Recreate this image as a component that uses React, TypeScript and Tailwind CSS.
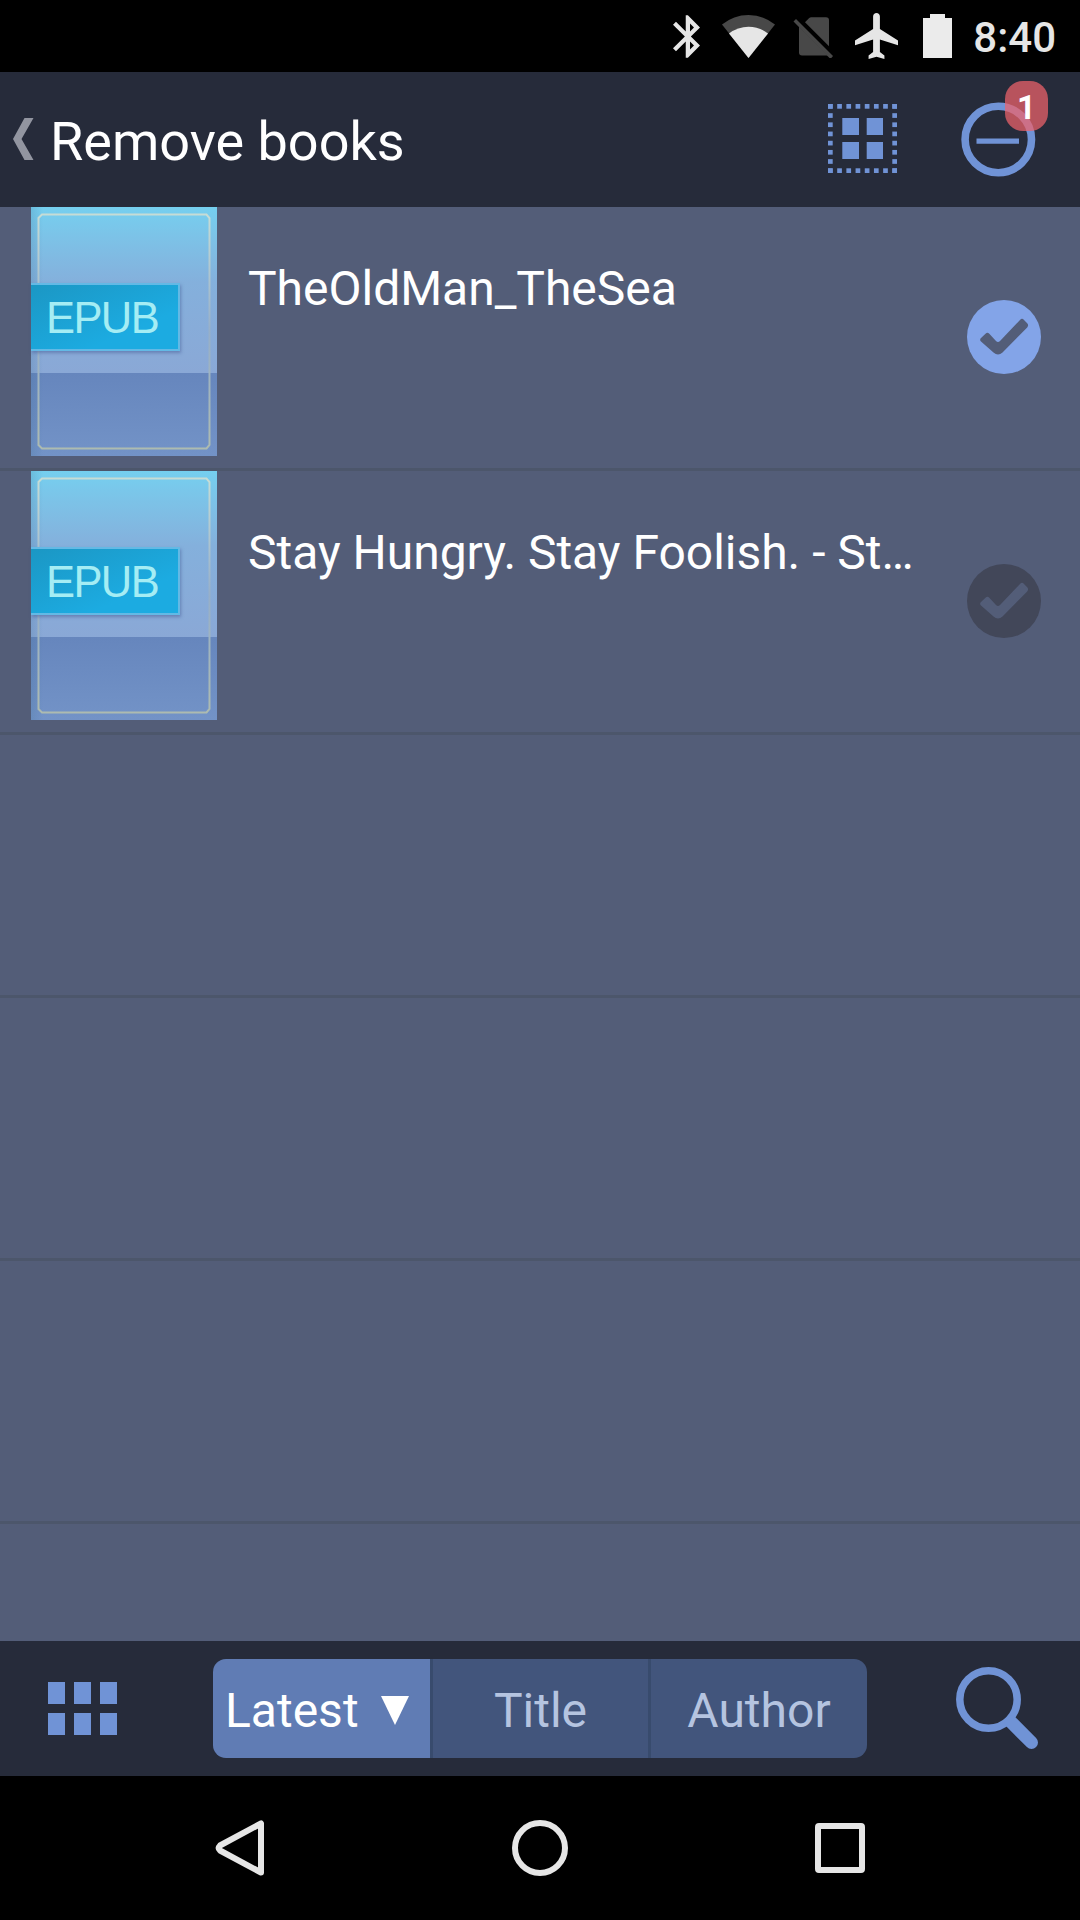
import React, { useState } from 'react';

interface Book {
  id: string;
  title: string;
}

const books: Book[] = [
  { id: 'old-man', title: 'TheOldMan_TheSea' },
  { id: 'stay-hungry', title: 'Stay Hungry. Stay Foolish. - St…' },
];

const sortOptions = ['Latest', 'Title', 'Author'];

const dots = Array.from({ length: 8 }, (_, i) => i * 9.19);

const StatusBar: React.FC = () => (
  <div className="h-[72px] shrink-0 bg-black flex items-center justify-end pr-6 text-[#e6e6e6]">
    <svg className="w-[27px] h-[43px]" viewBox="5 2 12.71 20" fill="currentColor">
      <path d="M17.71 7.71L12 2h-1v7.59L6.41 5 5 6.41 10.59 12 5 17.59 6.41 19 11 14.41V22h1l5.71-5.71-4.3-4.29 4.3-4.29zM13 5.83l1.88 1.88L13 9.59V5.83zm1.88 10.46L13 18.17v-3.76l1.88 1.88z" />
    </svg>
    <svg className="w-[53px] h-[43px] ml-[22px]" viewBox="0 0 53 43">
      <path d="M26.5 43 0 9.6Q11.5 0 26.5 0T53 9.6z" fill="#484848" />
      <path d="M26.5 43 7 18.4Q16 11.7 26.5 11.7T46 18.4z" fill="currentColor" />
    </svg>
    <svg className="w-10 h-[43px] ml-[18px]" viewBox="0 0 40 43" fill="#484848">
      <path d="M12 7.2 16.2 3q.8-.8 2-.8H33q3 0 3 3v26z" />
      <path d="M6 11.5 35 40.5H9q-3 0-3-3z" />
      <path d="M3 4 40 41l-2.5 3L.5 6.5z" />
    </svg>
    <svg className="w-[43px] h-[46px] ml-[22px]" viewBox="2 2 19 20" preserveAspectRatio="none" fill="currentColor">
      <path d="M21 16v-2l-8-5V3.5c0-.83-.67-1.5-1.5-1.5S10 2.67 10 3.5V9l-8 5v2l8-2.5V19l-2 1.5V22l3.5-1 3.5 1v-1.5L13 19v-5.5l8 2.5z" />
    </svg>
    <svg className="w-[29px] h-11 ml-[25px]" viewBox="0 0 29 44" fill="#ebebeb">
      <path d="M0 4h7V0h15v4h7v40H0z" />
    </svg>
    <span className="ml-[21px] mt-[3px] text-[42px] leading-[50px] font-medium">8:40</span>
  </div>
);

const Header: React.FC<{ count: number }> = ({ count }) => (
  <header className="h-[135px] shrink-0 bg-[#262b3a] flex items-center pl-[13px] pr-11 text-[#7093d6]">
    <svg className="w-[21px] h-[42px] mb-0.5" viewBox="0 0 21 42">
      <path d="M11.5 0h9L8.5 21l12 21h-9L0 21z" fill="#9295a0" />
    </svg>
    <h1 className="ml-4 mt-[5px] text-[54px] leading-none text-white">Remove books</h1>
    <button className="ml-auto mb-0.5">
      <svg className="w-[69px] h-[69px]" viewBox="0 0 69 69" fill="currentColor">
        {dots.map((p) => (
          <React.Fragment key={p}>
            <rect x={p} y="0" width="4.7" height="4.7" />
            <rect x={p} y="64.3" width="4.7" height="4.7" />
            <rect x="0" y={p} width="4.7" height="4.7" />
            <rect x="64.3" y={p} width="4.7" height="4.7" />
          </React.Fragment>
        ))}
        <path d="M14.3 14H31v17H14.3zM38.7 14H55v17H38.7zM14.3 38H31v17H14.3zM38.7 38H55v17H38.7z" />
      </svg>
    </button>
    <button className="relative ml-16">
      <svg className="w-[75px] h-[75px]" viewBox="0 0 75 75" fill="none" stroke="currentColor">
        <circle cx="37.3" cy="37.5" r="33.2" strokeWidth="7.6" />
        <path d="M15.5 39.2H58" strokeWidth="5.2" />
      </svg>
      <span className="absolute left-11 -top-[21px] w-[43px] h-[50px] rounded-[18px] bg-[#ee636b]/73 text-white text-[33px] leading-[53px] font-bold text-center">
        {count}
      </span>
    </button>
  </header>
);

const BookCover: React.FC = () => (
  <div className="relative w-[186px] h-[249px] shrink-0 flex flex-col">
    <div className="h-[166px] bg-linear-to-b from-[#75cfef] via-[#84b0dc] via-45% to-[#8aa8d6]" />
    <div className="grow bg-linear-to-b from-[#6686bd] to-[#7393c7]" />
    <div className="absolute inset-y-0 left-0 w-3 bg-linear-to-r from-[#3c6f94]/20 to-transparent" />
    <svg className="absolute inset-0 w-full h-full" viewBox="0 0 186 249" fill="none">
      <defs>
        <linearGradient id="frame" x1="0" y1="0" x2="0" y2="1">
          <stop offset="0" stopColor="#c6dcd5" />
          <stop offset=".5" stopColor="#96afc9" />
          <stop offset="1" stopColor="#adbbb0" />
        </linearGradient>
      </defs>
      <path d="M11 7.5H175.5L178.5 11V238L175.5 241.5H11L7.5 238V11z" stroke="url(#frame)" strokeWidth="2" />
    </svg>
    <div className="absolute left-0 top-[76px] w-[149px] h-[68px] border-2 border-l-0 border-[#63b9e5] bg-linear-to-br from-[#1b97c4] to-[#1cabe1] to-70% shadow-[1px_2px_3px_rgba(70,90,150,0.5)] pl-[15px] font-['Liberation_Sans',sans-serif] text-[43.5px] leading-[67px] tracking-[-1.6px] text-[#a5edf4]">
      EPUB
    </div>
  </div>
);

const BookRow: React.FC<{ book: Book; selected: boolean; onToggle: () => void }> = ({ book, selected, onToggle }) => (
  <div className="h-[264px] shrink-0 border-b-[3px] border-[#4c566b] flex pl-[31px] pr-[39px]">
    <BookCover />
    <p className="ml-[31px] mt-[53px] w-[670px] text-[48px] leading-[58px] tracking-[-0.02px] text-white truncate">{book.title}</p>
    <button onClick={onToggle} className="ml-auto mb-0.5 self-center">
      <svg className="w-[74px] h-[74px]" viewBox="0 0 74 74">
        <circle cx="37" cy="37" r="37" fill={selected ? '#83a4e8' : '#424759'} />
        <path
          d="M14 38 18.5 33.7Q20.4 32 22.3 33.7L29 41Q31 43 33 41L53 20Q55 17.5 57 20L60.2 23.2Q62 25.3 60.2 27.5L35.5 52.5Q31 56.5 26.5 52.5L14 41.5Q12.3 39.7 14 38z"
          fill="#535d78"
        />
      </svg>
    </button>
  </div>
);

const NavigationBar: React.FC = () => (
  <div className="h-36 shrink-0 bg-black flex items-center justify-between px-[215px]">
    <svg className="w-[50px] h-[56px]" viewBox="0 0 50 56" fill="none" stroke="#e6e6e6" strokeWidth="6" strokeLinejoin="round">
      <path d="M46 3.5V52.5L5 30.5Q2.5 28 5 25.5z" />
    </svg>
    <svg className="w-[56px] h-[56px]" viewBox="0 0 56 56" fill="none" stroke="#e6e6e6" strokeWidth="6">
      <circle cx="28" cy="28" r="25" />
    </svg>
    <svg className="w-[50px] h-[50px]" viewBox="0 0 50 50" fill="none" stroke="#e6e6e6" strokeWidth="6">
      <rect x="3" y="3" width="44" height="44" rx="1" />
    </svg>
  </div>
);

export default function App() {
  const [selected, setSelected] = useState<string[]>(['old-man']);
  const [sort, setSort] = useState('Latest');

  const toggle = (id: string) => {
    setSelected(selected.includes(id) ? selected.filter((s) => s !== id) : [...selected, id]);
  };

  return (
    <div className="w-[1080px] h-[1920px] overflow-hidden flex flex-col bg-[#535d78] font-[Roboto,sans-serif]">
      <StatusBar />
      <Header count={selected.length} />

      <main className="grow min-h-0 overflow-hidden flex flex-col">
        {books.map((book) => (
          <BookRow key={book.id} book={book} selected={selected.includes(book.id)} onToggle={() => toggle(book.id)} />
        ))}
        {[1, 2, 3].map((row) => (
          <div key={row} className="h-[263px] shrink-0 border-b-[3px] border-[#4c566b]" />
        ))}
      </main>

      <footer className="h-[135px] shrink-0 bg-[#262b3a] flex items-center pl-12 pr-[42px] text-[#7093d6]">
        <div className="grid grid-cols-3 gap-[9px]">
          {[0, 1, 2, 3, 4, 5].map((cell) => (
            <div key={cell} className="w-[17px] h-[22px] bg-[#7093d6]" />
          ))}
        </div>

        <div className="ml-24 w-[654px] h-[99px] rounded-[13px] overflow-hidden flex divide-x-[3px] divide-[#384b6d]">
          {sortOptions.map((option) => (
            <button
              key={option}
              onClick={() => setSort(option)}
              className={`w-[218px] first:w-[220px] last:w-[216px] shrink-0 flex items-center pt-1 text-[48px] leading-none ${
                sort === option ? 'bg-[#607cb4] text-white pl-3' : 'bg-[#42557c] text-[#b5c4e0] justify-center'
              }`}
            >
              {option}
              {sort === option && (
                <svg className="w-7 h-[29px] ml-[22px]" viewBox="0 0 28 29" fill="currentColor">
                  <path d="M0 0h28L14 29z" />
                </svg>
              )}
            </button>
          ))}
        </div>

        <svg className="w-[82px] h-[82px] ml-auto mb-0.5" viewBox="0 0 82 82" fill="none" stroke="currentColor">
          <circle cx="32.5" cy="32.5" r="28.7" strokeWidth="7.5" />
          <path d="M55 55 75.5 75.5" strokeWidth="13" strokeLinecap="round" />
        </svg>
      </footer>

      <NavigationBar />
    </div>
  );
}
